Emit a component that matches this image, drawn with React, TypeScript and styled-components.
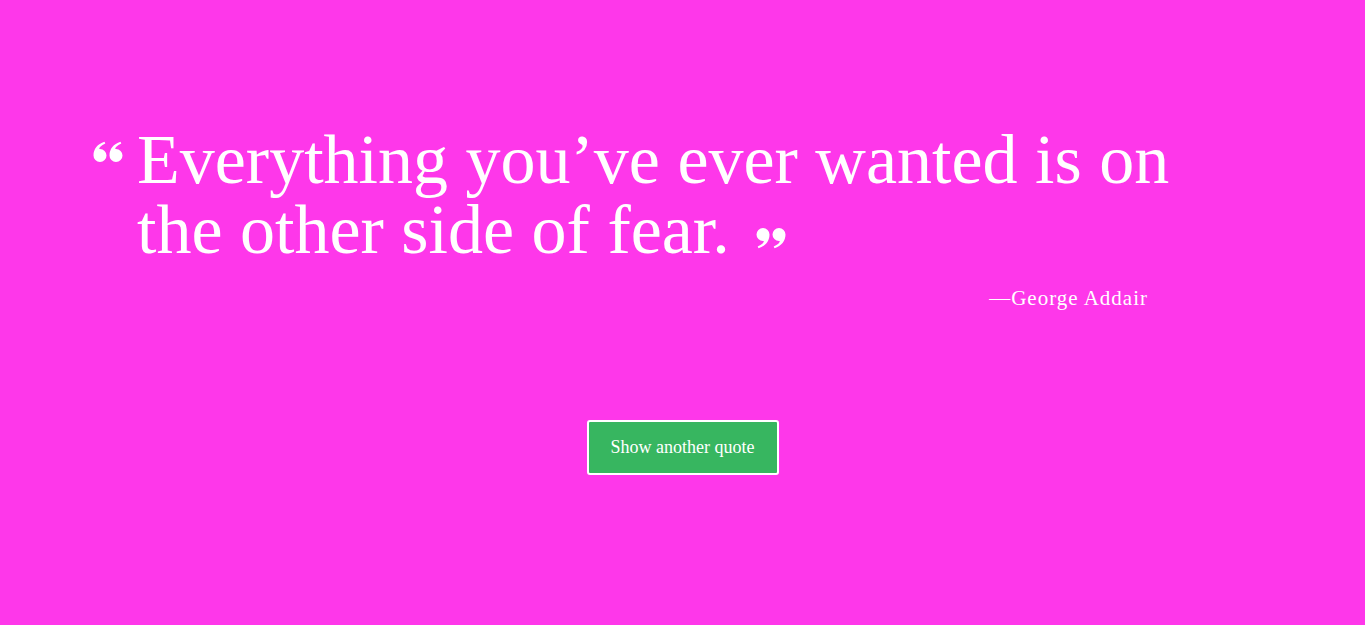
import React from 'react';
import styled, { createGlobalStyle } from 'styled-components';

const GlobalStyle = createGlobalStyle`
  html, body {
    margin: 0;
    padding: 0;
    background: #fe37ea;
  }
  body {
    font-family: "Liberation Serif", "DejaVu Serif", serif;
    color: #fff;
  }
`;

const quote = {
  text: 'Everything you’ve ever wanted is on the other side of fear.',
  author: 'George Addair',
};

// one "6" shaped comma, the pair is drawn twice
const mark = 'M7 7.5 A6.5 6.5 0 1 1 0.5 14 C0.5 7.5 4.5 2.5 11.5 0.3 L12.3 2 C8 4 6.2 6 6.2 7.6 Z';

const QuoteMark = ({ flip }: { flip?: boolean }) => (
  <svg width="31" height="22" viewBox="0 0 31 22">
    <g transform={flip ? 'rotate(180 15.5 11)' : undefined} fill="#fff">
      <path d={mark} transform="translate(1 0.5)" />
      <path d={mark} transform="translate(17 0.5)" />
    </g>
  </svg>
);

const App = () => {
  return (
    <Page>
      <GlobalStyle />
      <QuoteBox>
        <QuoteRow>
          <OpenMark>
            <QuoteMark />
          </OpenMark>
          <QuoteText>
            {quote.text}
            <CloseMark>
              <QuoteMark flip />
            </CloseMark>
          </QuoteText>
        </QuoteRow>
        <Author>—{quote.author}</Author>
      </QuoteBox>
      <Button>Show another quote</Button>
    </Page>
  );
};

export default App;

const Page = styled.div`
  width: 100%;
  height: 625px;
  background: #fe37ea;
  display: flex;
  flex-direction: column;
  align-items: center;
  padding-top: 125px;
  box-sizing: border-box;
`;

const QuoteBox = styled.div`
  width: 1181px;
  display: flex;
  flex-direction: column;
`;

const QuoteRow = styled.div`
  display: flex;
  align-items: flex-start;
  gap: 13px;
`;

const OpenMark = styled.span`
  display: flex;
  width: 32px;
  margin-top: 16px;
`;

const QuoteText = styled.p`
  margin: 0;
  width: 1100px;
  font-size: 70px;
  line-height: 70px;
  font-weight: normal;
`;

const CloseMark = styled.span`
  display: inline-block;
  margin-left: 26px;
  vertical-align: 4px;
  line-height: 0;
`;

const Author = styled.div`
  align-self: flex-end;
  margin-right: 125px;
  margin-top: 21px;
  font-size: 21px;
  letter-spacing: 1px;
`;

const Button = styled.button`
  margin-top: 109px;
  width: 192px;
  height: 55px;
  background: #37b660;
  color: #fff;
  border: 2px solid #fff;
  border-radius: 3px;
  font-family: "Liberation Serif", serif;
  font-size: 18px;
  cursor: pointer;
`;
